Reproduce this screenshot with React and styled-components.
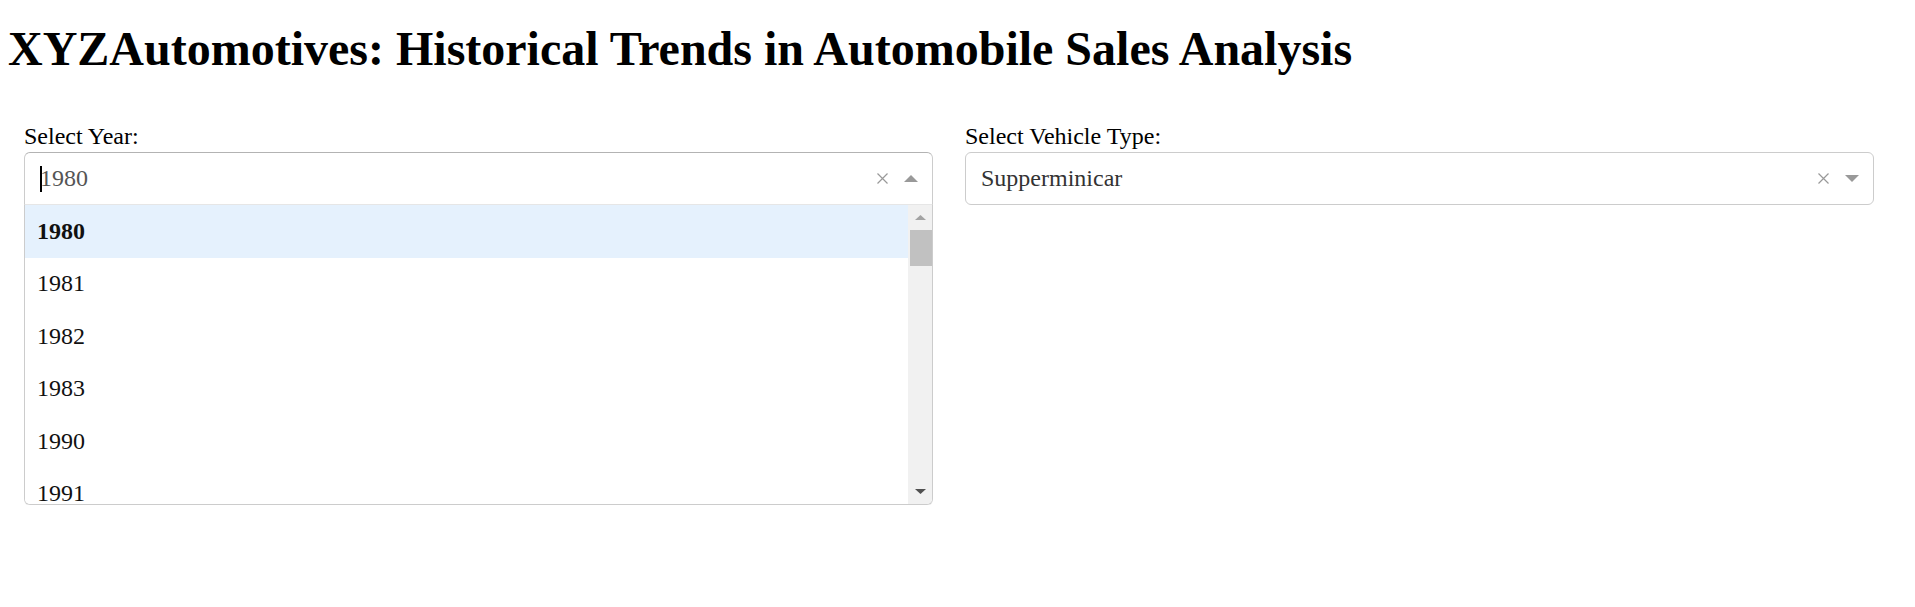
import React from "react";
import styled, { createGlobalStyle } from "styled-components";

const GlobalStyle = createGlobalStyle`
  body {
    margin: 0;
    background: #ffffff;
    font-family: "Liberation Serif", "Times New Roman", serif;
    color: #000000;
  }
`;

// years shown in the open dropdown (list is clipped by the menu height)
const years = [1980, 1981, 1982, 1983, 1990, 1991, 1992, 1993, 2000, 2001];

function ClearIcon() {
  return (
    <svg width="11" height="11" viewBox="0 0 11 11">
      <path d="M0.5 0.5 L10.5 10.5 M10.5 0.5 L0.5 10.5" stroke="#999" strokeWidth="1.2" fill="none" />
    </svg>
  );
}

function Arrow({ up, width = 14, height = 7, color = "#999" }) {
  return (
    <svg width={width} height={height} viewBox={`0 0 ${width} ${height}`}>
      {up ? (
        <polygon points={`0,${height} ${width},${height} ${width / 2},0`} fill={color} />
      ) : (
        <polygon points={`0,0 ${width},0 ${width / 2},${height}`} fill={color} />
      )}
    </svg>
  );
}

function Dropdown({ label, value, open, options }) {
  return (
    <Field>
      <Label>{label}</Label>
      <Control open={open}>
        <Value open={open}>
          {open && <Caret />}
          {value}
        </Value>
        <ClearIcon />
        <ArrowZone>
          <Arrow up={open} />
        </ArrowZone>
      </Control>
      {open && (
        <Menu>
          <OptionList>
            {options.map((opt) => (
              <Option key={opt} selected={opt === value}>
                {opt}
              </Option>
            ))}
          </OptionList>
          {/* scrollbar of the options list */}
          <Scrollbar>
            <ScrollButton>
              <Arrow up width={11} height={5} color="#a3a3a3" />
            </ScrollButton>
            <Thumb />
            <ScrollSpacer />
            <ScrollButton>
              <Arrow width={11} height={5} color="#505050" />
            </ScrollButton>
          </Scrollbar>
        </Menu>
      )}
    </Field>
  );
}

export default function App() {
  return (
    <Page>
      <GlobalStyle />
      <Title>XYZAutomotives: Historical Trends in Automobile Sales Analysis</Title>
      <Filters>
        <Dropdown label="Select Year:" value={1980} open options={years} />
        <Dropdown label="Select Vehicle Type:" value="Supperminicar" />
      </Filters>
    </Page>
  );
}

const Page = styled.div`
  padding: 0 8px;
`;

const Title = styled.h1`
  font-size: 48px;
  font-weight: bold;
  line-height: 53px;
  margin: 22px 0 0;
`;

const Filters = styled.div`
  display: flex;
  gap: 32px;
  padding-left: 16px;
  margin-top: 48px;
`;

const Field = styled.div`
  width: 909px;
  display: flex;
  flex-direction: column;
`;

const Label = styled.label`
  font-size: 24px;
  line-height: 27px;
  margin-bottom: 2px;
`;

const Control = styled.div`
  box-sizing: border-box;
  height: 53px;
  display: flex;
  align-items: center;
  padding: 0 14px 0 15px;
  background: #ffffff;
  border: 1px solid #cccccc;
  border-radius: ${(p) => (p.open ? "6px 6px 0 0" : "6px")};
  border-color: ${(p) => (p.open ? "#b3b3b3 #cccccc #d9d9d9" : "#cccccc")};
`;

const Value = styled.div`
  flex: 1;
  display: flex;
  align-items: center;
  font-size: 24px;
  color: ${(p) => (p.open ? "#555555" : "#333333")};
`;

const Caret = styled.span`
  display: inline-block;
  width: 2px;
  height: 26px;
  background: #000000;
  margin-right: -2px;
`;

const ArrowZone = styled.span`
  display: flex;
  align-items: center;
  margin-left: 16px;
`;

const Menu = styled.div`
  box-sizing: border-box;
  height: 301px;
  margin-top: -1px;
  display: flex;
  overflow: hidden;
  border: 1px solid #cccccc;
  border-top-color: #e6e6e6;
  border-radius: 0 0 6px 6px;
  box-shadow: 0 1px 0 rgba(0, 0, 0, 0.06);
`;

const OptionList = styled.div`
  flex: 1;
  overflow: hidden;
`;

const Option = styled.div`
  box-sizing: border-box;
  height: 52.5px;
  display: flex;
  align-items: center;
  padding-left: 12px;
  font-size: 24px;
  color: #111111;
  font-weight: ${(p) => (p.selected ? "bold" : "normal")};
  background: ${(p) => (p.selected ? "#e5f1fd" : "#ffffff")};
`;

const Scrollbar = styled.div`
  width: 24px;
  display: flex;
  flex-direction: column;
  background: #f1f1f1;
`;

const ScrollButton = styled.div`
  height: 25px;
  display: flex;
  align-items: center;
  justify-content: center;
`;

const Thumb = styled.div`
  height: 36px;
  margin-left: 2px;
  background: #c1c1c1;
`;

const ScrollSpacer = styled.div`
  flex: 1;
`;
